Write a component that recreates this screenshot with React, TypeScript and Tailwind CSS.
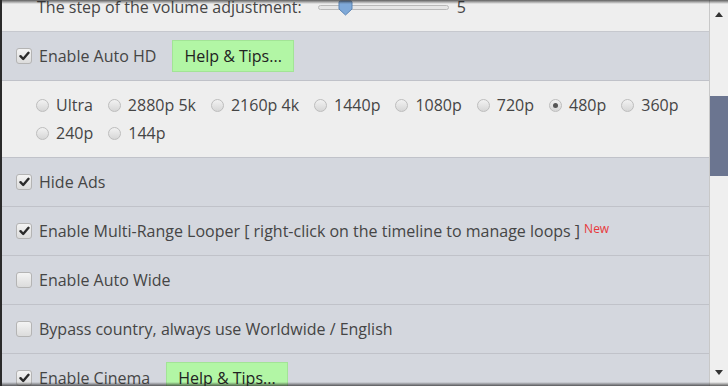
import React from 'react';

const Checkbox: React.FC<{ checked?: boolean }> = ({ checked }) => (
  <span className="w-[16px] h-[16px] shrink-0 rounded-[3px] border border-[#b4b4b4] bg-gradient-to-b from-[#f4f4f4] to-[#dcdcdc] flex items-center justify-center">
    {checked && (
      <svg width="11" height="10" viewBox="0 0 11 10">
        <path d="M1.5 5.2 L4.2 8 L9.5 1.8" fill="none" stroke="#2b2b2b" strokeWidth="2.4" strokeLinecap="round" strokeLinejoin="round" />
      </svg>
    )}
  </span>
);

const Radio: React.FC<{ checked?: boolean }> = ({ checked }) => (
  <span className="w-[13px] h-[13px] shrink-0 rounded-full border border-[#bdbdbd] bg-gradient-to-b from-[#f2f2f2] to-[#d6d6d6] flex items-center justify-center">
    {checked && <span className="w-[5px] h-[5px] rounded-full bg-[#555]" />}
  </span>
);

const HelpButton: React.FC = () => (
  <span className="ml-4 h-[32px] px-[11px] flex items-center bg-[#b2f6a5] border border-[#a2e496] text-[#222] text-[16px]">
    Help &amp; Tips...
  </span>
);

const Row: React.FC<{ checked?: boolean; children: React.ReactNode; extra?: React.ReactNode }> = ({ checked, children, extra }) => (
  <div className="h-[49px] flex items-center pl-[14px] bg-[#d4d7de] border-b border-[#c0c2c9]">
    <Checkbox checked={checked} />
    <span className="ml-[7px] text-[#454545]">{children}</span>
    {extra}
  </div>
);

const qualities = ['Ultra', '2880p 5k', '2160p 4k', '1440p', '1080p', '720p', '480p', '360p', '240p', '144p'];

export default function App() {
  return (
    <div
      className="relative w-[728px] h-[386px] overflow-hidden flex border-l-2 border-[#2a2a2a] bg-[#eeeeee] text-[16px]"
      style={{ fontFamily: '"Open Sans", "Noto Sans", sans-serif' }}
    >
      <div className="flex-1 overflow-hidden">
        <div className="-mt-[17px]">
          <div className="h-[49px] flex items-center pl-[35px] bg-[#eeeeee] border-b border-[#c6c8ce] text-[#454545]">
            <span>The step of the volume adjustment:</span>
            <span className="relative ml-[16px] w-[131px] h-[5px] rounded-full border border-[#b9b9b9] bg-[#e6e6e6]">
              <svg className="absolute left-[19px] -top-[6px]" width="15" height="16" viewBox="0 0 15 16">
                <path d="M1 2.5 Q1 1 2.5 1 H12.5 Q14 1 14 2.5 V9 L7.5 15 L1 9 Z" fill="#7fa9d8" stroke="#5b84b5" strokeWidth="1" />
              </svg>
            </span>
            <span className="ml-[8px]">5</span>
          </div>
          <Row checked extra={<HelpButton />}>Enable Auto HD</Row>
          <div className="bg-[#eeeeee] border-b border-[#c0c2c9] pl-[34px] pr-[2px] py-[10px] flex flex-wrap text-[#454545]">
            {qualities.map((q) => (
              <label key={q} className="h-[28px] flex items-center mr-[15px]">
                <Radio checked={q === '480p'} />
                <span className="ml-[7px]">{q}</span>
              </label>
            ))}
          </div>
          <Row checked>Hide Ads</Row>
          <Row
            checked
            extra={<span className="ml-[4px] -mt-[4px] text-[12px] text-[#e8373b]">New</span>}
          >
            Enable Multi-Range Looper [ right-click on the timeline to manage loops ]
          </Row>
          <Row>Enable Auto Wide</Row>
          <Row>Bypass country, always use Worldwide / English</Row>
          <Row checked extra={<HelpButton />}>Enable Cinema</Row>
        </div>
      </div>
      <div className="w-[19px] shrink-0 bg-[#efefef] border-l border-[#c8c8c8] flex flex-col">
        <div className="h-[28px] flex items-center justify-center">
          <svg width="8" height="5" viewBox="0 0 8 5"><path d="M0 5 L4 0 L8 5 Z" fill="#333" /></svg>
        </div>
        <div className="mt-[68px] h-[80px] bg-[#6b7590]" />
        <div className="flex-1" />
        <div className="h-[28px] flex items-center justify-center">
          <svg width="8" height="5" viewBox="0 0 8 5"><path d="M0 0 L8 0 L4 5 Z" fill="#333" /></svg>
        </div>
      </div>
      <div className="absolute left-0 right-0 top-0 h-[4px] bg-gradient-to-b from-[#222]/70 to-transparent" />
      <div className="absolute left-0 right-0 bottom-0 h-[4px] bg-gradient-to-t from-[#222]/70 to-transparent" />
    </div>
  );
}
